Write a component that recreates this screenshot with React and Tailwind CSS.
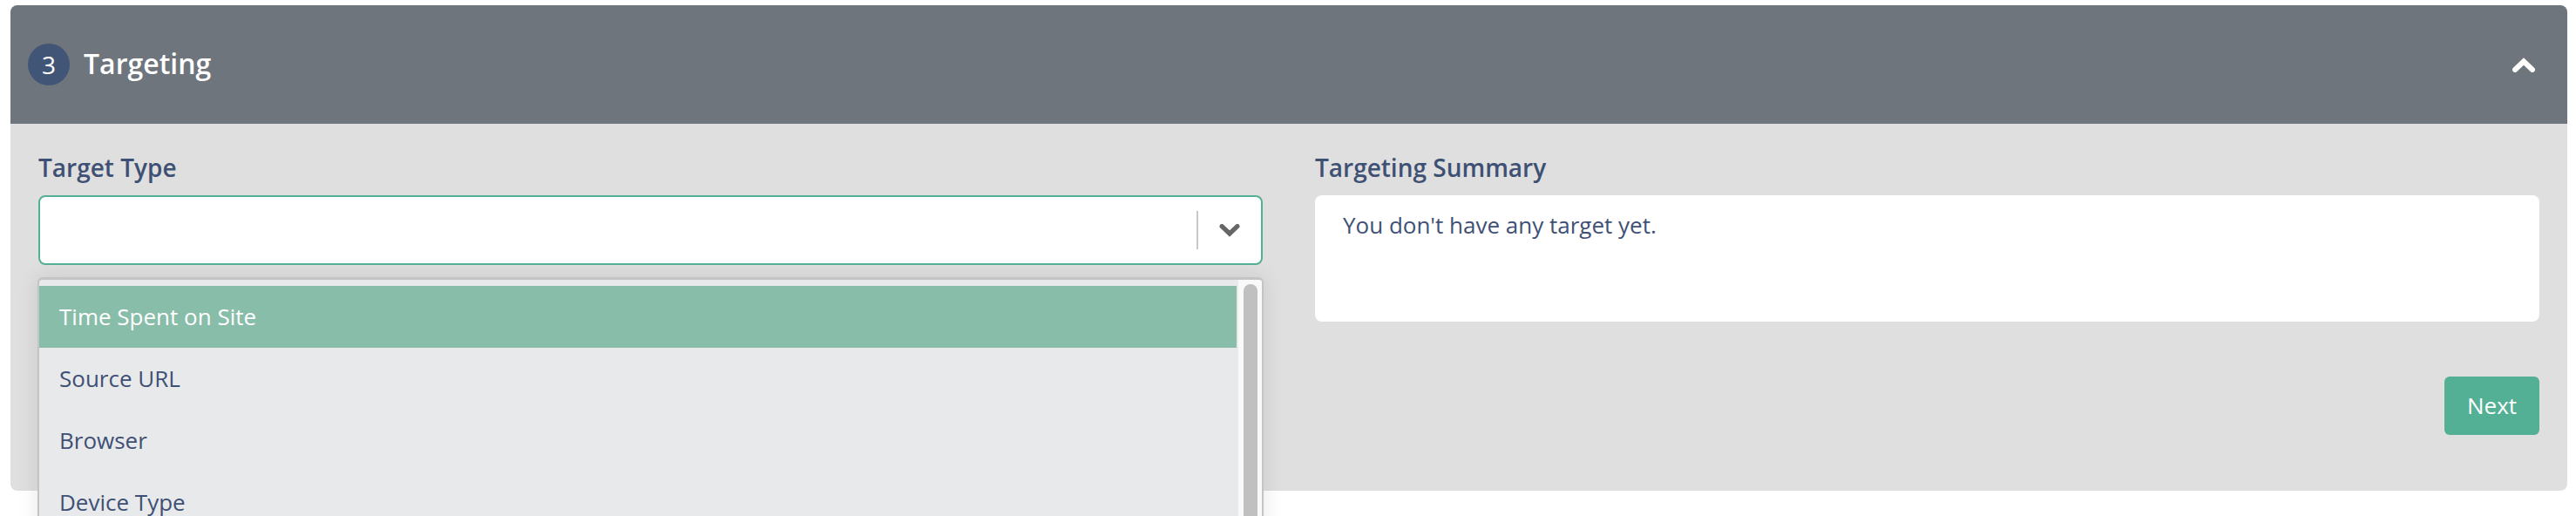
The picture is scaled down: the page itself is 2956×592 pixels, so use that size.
const options = ["Time Spent on Site", "Source URL", "Browser", "Device Type"];

function Chevron({ up, className }) {
    return (
        <svg viewBox="0 0 26 17" className={className} fill="none" stroke="currentColor" strokeWidth="6" strokeLinecap="round" strokeLinejoin="miter">
            <polyline points={up ? "3,14 13,4.5 23,14" : "3,3 13,12.5 23,3"} />
        </svg>
    );
}

export default function App() {
    return (
        <div className="h-[592px] overflow-hidden bg-white pt-[6px] px-[12px] pr-[10px] font-['Open_Sans',sans-serif]">
            <div className="rounded-[8px] bg-[#dfdfdf]">

                {/* header */}
                <div className="h-[136px] rounded-t-[8px] bg-[#6e757d] pl-[20px] pr-[37px] flex items-center justify-between">
                    <div className="flex items-center gap-[16px] text-white">
                        <div className="w-[48px] h-[48px] rounded-full bg-[#415577] flex items-center justify-center text-[28px]">3</div>
                        <div className="text-[32px] leading-[44px] font-semibold -mt-[2px]">Targeting</div>
                    </div>
                    <Chevron up className="w-[26px] h-[17px] text-white" />
                </div>

                {/* body */}
                <div className="px-[32px] pt-[32px] pb-[64px] h-[421px]">
                    <div className="grid grid-cols-[1405px_1405px] gap-[60px]">

                        {/* target type */}
                        <div className="relative">
                            <label className="block h-[50px] text-[28px] leading-[36px] font-semibold text-[#3e5074]">Target Type</label>
                            <div className="h-[80px] rounded-[8px] border-[2px] border-[#54b095] bg-white flex items-center justify-end">
                                <div className="w-[2px] h-[44px] bg-[#c8c8c8]"></div>
                                <Chevron className="w-[24px] h-[15px] mx-[24px] text-[#666666]" />
                            </div>

                            {/* dropdown menu */}
                            <div className="absolute top-[144px] left-[-1px] right-[-1px] h-[400px] flex rounded-t-[6px] border-t-[3px] border-x-[2px] border-[#c4c4c4] bg-[#e8e9eb] shadow-[0_0_24px_rgba(0,0,0,0.1)] overflow-hidden">
                                <div className="flex-1 pt-[7px]">
                                    {options.map((option, i) => (
                                        <div key={option} className={"h-[71px] pl-[23px] mr-[2px] flex items-center text-[26px] " + (i === 0 ? "bg-[#88bdaa] text-white" : "text-[#3e5074]")}>
                                            {option}
                                        </div>
                                    ))}
                                </div>
                                <div className="w-[27px] bg-[#f9f9f9] pt-[5px] pl-[6px]">
                                    <div className="w-[16px] h-[300px] rounded-full bg-[#c0c0c0]"></div>
                                </div>
                            </div>
                        </div>

                        {/* summary */}
                        <div>
                            <label className="block h-[50px] text-[28px] leading-[36px] font-semibold text-[#3e5074]">Targeting Summary</label>
                            <div className="h-[145px] rounded-[8px] bg-white px-[32px] pt-[16px] text-[26px] leading-[36px] text-[#3e5074]">You don't have any target yet.</div>
                            <div className="flex justify-end mt-[63px]">
                                <button className="w-[109px] h-[67px] rounded-[6px] bg-[#54b095] text-white text-[26px]">Next</button>
                            </div>
                        </div>
                    </div>
                </div>
            </div>
        </div>
    );
}
